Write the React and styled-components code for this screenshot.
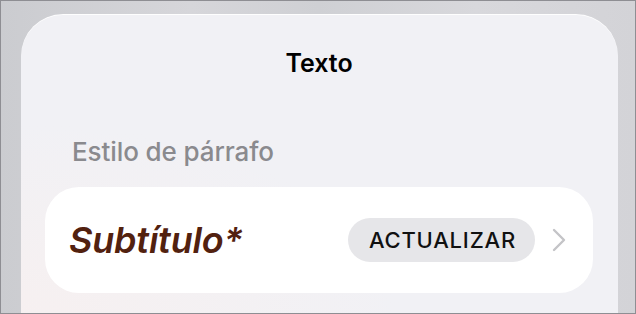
import { createGlobalStyle, styled } from "styled-components";

const GlobalStyle = createGlobalStyle`
  html, body {
    margin: 0;
    padding: 0;
    background: #d2d3d7;
  }
  * {
    box-sizing: border-box;
  }
`;

const Screen = styled.div`
  width: 636px;
  height: 314px;
  border: 1px solid #8e8e93;
  overflow: hidden;
  padding: 13px 17px 0 20px;
  background: linear-gradient(
    90deg,
    #cbccd0 0%,
    #d6d6da 30%,
    #cfd0d4 50%,
    #d8d8dc 75%,
    #d3d3d7 100%
  );
  font-family: Inter, "Noto Sans", sans-serif;
`;

const Sheet = styled.div`
  height: 100%;
  border-radius: 42px 42px 0 0;
  background: radial-gradient(
      ellipse at 0% 100%,
      rgba(247, 240, 240, 0.9) 0%,
      rgba(242, 242, 246, 0) 45%
    ),
    #f1f1f5;
  box-shadow: inset 0 1px 0 rgba(255, 255, 255, 0.9);
  padding: 34px 25px 0 24px;
  display: flex;
  flex-direction: column;
`;

const Title = styled.h1`
  margin: 0;
  text-align: center;
  font-size: 25px;
  line-height: 30px;
  font-weight: 600;
  color: #000;
`;

const SectionLabel = styled.div`
  margin: 59px 0 0 27px;
  font-size: 26px;
  line-height: 30px;
  font-weight: 500;
  color: #8a8a8e;
  letter-spacing: -0.1px;
`;

const Card = styled.div`
  margin-top: 20px;
  height: 106px;
  background: #fff;
  border-radius: 34px;
  display: flex;
  align-items: center;
  padding: 0 27px 0 24px;
`;

const StyleName = styled.span`
  flex: 1;
  font-size: 36px;
  font-weight: 600;
  font-style: italic;
  color: #52210f;
  letter-spacing: -0.2px;
`;

const UpdateButton = styled.button`
  height: 44px;
  padding: 0 19px 0 21px;
  border: none;
  border-radius: 22px;
  background: #e6e6e9;
  font-family: inherit;
  font-size: 22px;
  font-weight: 500;
  letter-spacing: 0.8px;
  color: #111;
`;

const Chevron = styled.svg`
  margin-left: 17px;
  width: 14px;
  height: 24px;
  flex: none;
`;

export default function App() {
  return (
    <>
      <GlobalStyle />
      <Screen>
        <Sheet>
          <Title>Texto</Title>
          <SectionLabel>Estilo de párrafo</SectionLabel>
          <Card>
            <StyleName>Subtítulo*</StyleName>
            <UpdateButton>ACTUALIZAR</UpdateButton>
            <Chevron viewBox="0 0 14 24">
              <path
                d="M2 2 L12 12 L2 22"
                fill="none"
                stroke="#c4c4c7"
                strokeWidth="2.4"
                strokeLinecap="round"
                strokeLinejoin="round"
              />
            </Chevron>
          </Card>
        </Sheet>
      </Screen>
    </>
  );
}
